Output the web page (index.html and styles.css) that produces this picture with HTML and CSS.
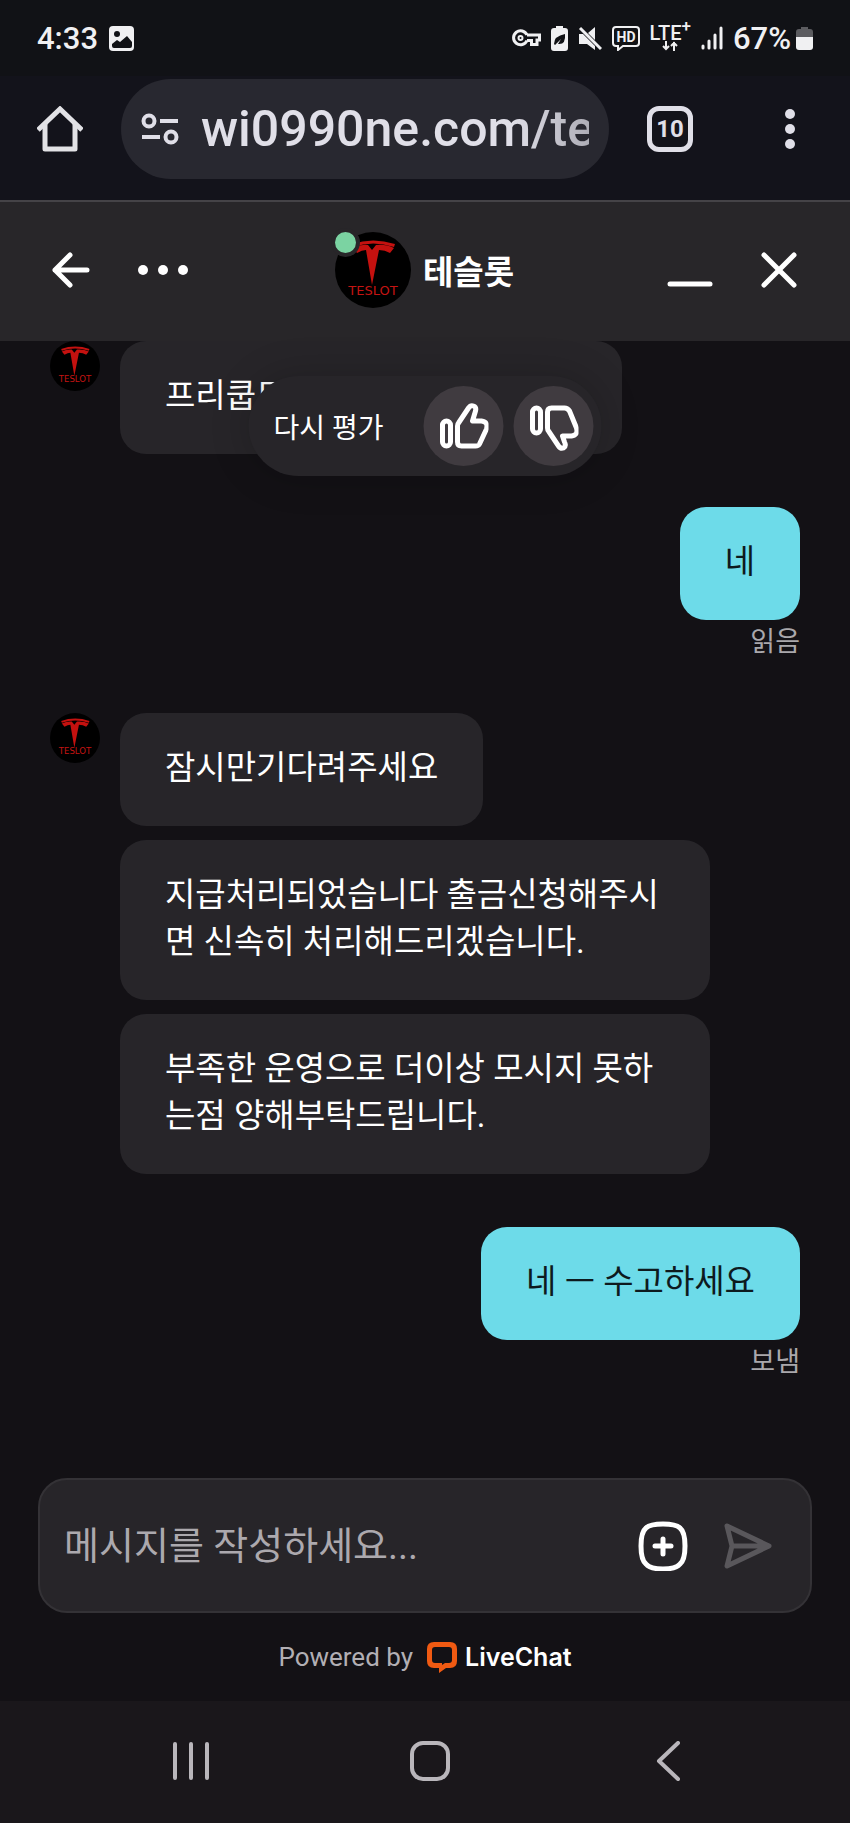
FILE: index.html
```
<!DOCTYPE html>
<html lang="ko">

<head>
    <meta charset="UTF-8">
    <meta name="viewport" content="width=device-width, initial-scale=1.0">
    <title>테슬롯</title>
    <link rel="stylesheet" href="styles.css">
</head>

<body>
    <!-- shared logo -->
    <svg class="defs" aria-hidden="true">
        <symbol id="logo" viewBox="0 0 76 76">
            <circle cx="38" cy="38" r="38" fill="#000" />
            <path d="M17 12Q38 5 60 12L59 15Q38 8 18 15Z" fill="#c4110f" />
            <path d="M18 16Q26 12 33 13L37 18L41 13Q51 12 59 16L55 21Q50 18 44 18L37 53L31 18Q27 18 22 21Z" fill="#c4110f" />
            <text x="38" y="63" text-anchor="middle" class="logo-text">TESLOT</text>
        </symbol>
    </svg>

    <div class="status">
        <span class="time">4:33</span>
        <svg class="picture" width="25" height="25" viewBox="0 0 25 25">
            <rect width="25" height="25" rx="4" fill="#f0f0f2" />
            <circle cx="8" cy="8" r="3" fill="#111216" />
            <path d="M3 18L8 14L11 16L18 10L23 16V20Q23 22 21 22H5Q3 22 3 20Z" fill="#111216" />
        </svg>
        <div class="indicators">
            <svg width="29" height="18" viewBox="0 0 29 18" fill="none" stroke="#f0f0f2" stroke-width="3">
                <path d="M15 6H27.5V11H25V15.5H19.5V11.5H15" />
                <path d="M15 6A7 7 0 1 0 15 11.5" />
                <circle cx="8.500" cy="9" r="2" stroke-width="2" />
            </svg>
            <svg width="17" height="25" viewBox="0 0 17 25">
                <path d="M5 0H12V2H14Q17 2 17 5V22Q17 25 14 25H3Q0 25 0 22V5Q0 2 3 2H5Z" fill="#f0f0f2" />
                <path d="M3 18Q3 10 14 8Q15 19 7 18L10 13L4 19Z" fill="#111216" />
            </svg>
            <svg width="24" height="25" viewBox="0 0 24 25">
                <path d="M1 8H5L17 20V24L9 18H1Z M10 7L17 1V14Z" fill="#f0f0f2" />
                <path d="M2 2L23 23" stroke="#f0f0f2" stroke-width="3" />
            </svg>
            <svg width="28" height="25" viewBox="0 0 28 25">
                <path d="M4 1H24Q27 1 27 4V17Q27 20 24 20H11L6 24V20H4Q1 20 1 17V4Q1 1 4 1Z" fill="none" stroke="#f0f0f2" stroke-width="2" />
                <text x="14" y="16" text-anchor="middle" class="hd">HD</text>
            </svg>
            <div class="lte">
                <span>LTE<sup>+</sup></span>
                <svg width="16" height="10" viewBox="0 0 16 10" fill="none" stroke="#f0f0f2" stroke-width="2">
                    <path d="M4 0V9M1 5L4 8L7 5M12 10V1M9 5L12 2L15 5" />
                </svg>
            </div>
            <svg width="22" height="24" viewBox="0 0 22 24" stroke="#f0f0f2" stroke-width="3" stroke-linecap="round">
                <path d="M2 20V22M8 15V22M14 9V22M20 2V22" />
            </svg>
            <div class="level">
                <span class="time">67%</span>
                <svg width="17" height="23" viewBox="0 0 17 23">
                    <path d="M5 0H12V2H14Q17 2 17 5V10H0V5Q0 2 3 2H5Z" fill="#5c5c60" />
                    <path d="M0 10H17V20Q17 23 14 23H3Q0 23 0 20Z" fill="#f0f0f2" />
                </svg>
            </div>
        </div>
    </div>

    <div class="toolbar">
        <button aria-label="Home">
            <svg width="46" height="46" viewBox="0 0 46 46" fill="none" stroke="#e2e2e6" stroke-width="5" stroke-linejoin="round">
                <path d="M1 24L23 3L45 24" stroke-linejoin="miter" />
                <path d="M8 18V43H38V18" />
            </svg>
        </button>
        <div class="address">
            <svg width="38" height="32" viewBox="0 0 38 32" fill="none" stroke="#e0dfe8" stroke-width="4">
                <circle cx="8" cy="8" r="5.500" />
                <circle cx="30" cy="24" r="5.500" />
                <path d="M19 8H37M1 24H19" />
            </svg>
            <input type="text" value="wi0990ne.com/te" aria-label="Address">
        </div>
        <button class="tabs" aria-label="Tabs">10</button>
        <button class="more" aria-label="Menu">
            <svg width="40" height="46" viewBox="0 0 40 46" fill="#e0dfe8">
                <circle cx="20" cy="8" r="5" />
                <circle cx="20" cy="23" r="5" />
                <circle cx="20" cy="38" r="5" />
            </svg>
        </button>
    </div>

    <header class="chat-header">
        <div class="actions">
            <button aria-label="뒤로">
                <svg width="38" height="38" viewBox="0 0 38 38" fill="none" stroke="#fff" stroke-width="5" stroke-linecap="round" stroke-linejoin="round">
                    <path d="M35 19H3M18 4L3 19L18 34" />
                </svg>
            </button>
            <button aria-label="옵션">
                <svg width="50" height="38" viewBox="0 0 50 38" fill="#fff">
                    <circle cx="5" cy="19" r="5" />
                    <circle cx="25" cy="19" r="5" />
                    <circle cx="45" cy="19" r="5" />
                </svg>
            </button>
        </div>
        <div class="agent">
            <div class="agent-photo">
                <svg width="76" height="76"><use href="#logo" /></svg>
                <span class="online"></span>
            </div>
            <h1>테슬롯</h1>
        </div>
        <div class="actions right">
            <button aria-label="최소화">
                <svg width="46" height="38" viewBox="0 0 46 38" stroke="#fff" stroke-width="5" stroke-linecap="round">
                    <path d="M3 33H43" />
                </svg>
            </button>
            <button aria-label="닫기">
                <svg width="36" height="38" viewBox="0 0 36 38" stroke="#fff" stroke-width="5" stroke-linecap="round">
                    <path d="M3 4L33 34M33 4L3 34" />
                </svg>
            </button>
        </div>
    </header>

    <main class="feed">
        <div class="rating">
            <span>다시 평가</span>
            <button aria-label="좋아요">
                <svg width="50" height="50" viewBox="0 0 50 50" fill="none" stroke="#fff" stroke-width="5" stroke-linejoin="round">
                    <rect x="4" y="20" width="8" height="25" rx="4" />
                    <path d="M20 22L30 7Q32 4 35 5Q38 6 37 10L34 20H43Q50 21 48 28L41 43Q40 45 37 45H23Q19 45 19 41V25Q19 23 20 22Z" />
                </svg>
            </button>
            <button aria-label="싫어요">
                <svg width="50" height="50" viewBox="0 0 50 50" fill="none" stroke="#fff" stroke-width="5" stroke-linejoin="round">
                    <rect x="4" y="7" width="8" height="25" rx="4" />
                    <path d="M20 30L30 45Q32 48 35 47Q38 45 36 41L34 35H43Q50 34 48 27L41 10Q39 7 36 7H23Q19 7 19 11V27Q19 29 20 30Z" />
                </svg>
            </button>
        </div>

        <div class="group">
            <svg class="photo" width="50" height="50"><use href="#logo" /></svg>
            <div class="messages">
                <p class="bubble">프리쿱드리면 사용가능하세요.</p>
            </div>
        </div>

        <div class="group own">
            <p class="bubble">네</p>
            <span class="receipt">읽음</span>
        </div>

        <div class="group">
            <svg class="photo" width="50" height="50"><use href="#logo" /></svg>
            <div class="messages">
                <p class="bubble">잠시만기다려주세요</p>
                <p class="bubble">지급처리되었습니다 출금신청해주시면 신속히 처리해드리겠습니다.</p>
                <p class="bubble">부족한 운영으로 더이상 모시지 못하는점 양해부탁드립니다.</p>
            </div>
        </div>

        <div class="group own">
            <p class="bubble">네 ㅡ 수고하세요</p>
            <span class="receipt">보냄</span>
        </div>
    </main>

    <form class="composer">
        <input type="text" placeholder="메시지를 작성하세요..." aria-label="메시지">
        <button type="button" aria-label="첨부">
            <svg width="50" height="50" viewBox="0 0 50 50" fill="none" stroke="#fff" stroke-width="5" stroke-linecap="round">
                <path d="M25 3Q38 3 42 7Q47 11 47 25Q47 39 42 43Q38 48 25 48Q12 48 8 43Q3 39 3 25Q3 11 8 7Q12 3 25 3Z" />
                <path d="M25 18V33M17 25H33" />
            </svg>
        </button>
        <button type="submit" aria-label="보내기">
            <svg width="48" height="46" viewBox="0 0 48 46" fill="none" stroke="#59575b" stroke-width="5" stroke-linecap="round" stroke-linejoin="round">
                <path d="M3 3L45 23L3 43L8 23ZM8 23H42" />
            </svg>
        </button>
    </form>

    <footer class="powered">
        <span>Powered by</span>
        <a href="#">
            <svg width="30" height="31" viewBox="0 0 30 31">
                <path fill="#f05a12" fill-rule="evenodd" d="M7 0H23Q30 0 30 7V19Q30 26 23 26H19L12 31V26H7Q0 26 0 19V7Q0 0 7 0ZM8 5Q5 5 5 8V18Q5 21 8 21H15V23L18 21H22Q25 21 25 18V8Q25 5 22 5Z" />
            </svg>
            LiveChat
        </a>
    </footer>

    <nav class="system">
        <button aria-label="Recents">
            <svg width="40" height="40" viewBox="0 0 40 40" stroke="#b9b6bb" stroke-width="4" stroke-linecap="round">
                <path d="M4 3V37M20 3V37M36 3V37" />
            </svg>
        </button>
        <button aria-label="Home">
            <svg width="40" height="40" viewBox="0 0 40 40" fill="none" stroke="#b9b6bb" stroke-width="4">
                <rect x="2" y="2" width="36" height="36" rx="11" />
            </svg>
        </button>
        <button aria-label="Back">
            <svg width="40" height="40" viewBox="0 0 40 40" fill="none" stroke="#b9b6bb" stroke-width="4" stroke-linecap="round" stroke-linejoin="round">
                <path d="M29 2L10 20L29 38" />
            </svg>
        </button>
    </nav>
</body>

</html>
```
FILE: styles.css
```
* {
    box-sizing: border-box;
}

body {
    margin: 0;
    min-height: 100vh;
    display: flex;
    flex-direction: column;
    background: #131115;
    color: #fff;
    font-family: Roboto, "Noto Sans CJK KR", sans-serif;
}

button {
    display: flex;
    padding: 0;
    border: 0;
    background: none;
    color: inherit;
    font: inherit;
}

input {
    min-width: 0;
    padding: 0;
    border: 0;
    outline: 0;
    background: none;
    font: inherit;
}

svg {
    display: block;
    flex-shrink: 0;
}

.defs {
    display: none;
}

.logo-text {
    font: 13px "DejaVu Sans", sans-serif;
    fill: #c41412;
}

/* phone status bar */
.status {
    display: flex;
    align-items: center;
    height: 76px;
    padding: 0 37px;
    background: #111216;
    color: #f0f0f2;
}

.time {
    font-size: 31px;
    font-weight: 500;
}

.picture {
    margin-left: 11px;
}

.indicators {
    display: flex;
    align-items: center;
    gap: 10px;
    margin-left: auto;
}

.hd {
    font: bold 14px Roboto, sans-serif;
    fill: #f0f0f2;
}

.lte {
    display: flex;
    flex-direction: column;
    align-items: center;
    font: 500 20px/16px Roboto, sans-serif;
}

.lte sup {
    font-size: 17px;
    line-height: 0;
}

.level {
    display: flex;
    align-items: center;
    gap: 5px;
}

/* browser bar */
.toolbar {
    display: flex;
    align-items: center;
    padding: 3px 40px 21px 37px;
    background: #13131b;
}

.address {
    flex: 1;
    display: flex;
    align-items: center;
    gap: 22px;
    min-width: 0;
    height: 100px;
    margin: 0 38px;
    padding: 0 20px;
    border-radius: 50px;
    background: #282830;
}

.address input {
    flex: 1;
    color: #e0dfe8;
    font-size: 50px;
    font-weight: 500;
    -webkit-mask-image: linear-gradient(to right, #000 80%, #000b);
    mask-image: linear-gradient(to right, #000 80%, #000b);
}

.tabs {
    align-items: center;
    justify-content: center;
    width: 46px;
    height: 46px;
    border: 5px solid #e0dfe8;
    border-radius: 12px;
    color: #e0dfe8;
    font-size: 24px;
    font-weight: 700;
}

.more {
    margin-left: 77px;
}

/* chat */
.chat-header {
    display: grid;
    grid-template-columns: 1fr auto 1fr;
    align-items: center;
    height: 141px;
    padding: 0 53px 4px 52px;
    border-top: 2px solid #454347;
    background: #282629;
}

.actions {
    display: flex;
    gap: 48px;
}

.right {
    justify-content: flex-end;
}

.agent {
    display: flex;
    align-items: center;
    gap: 12px;
}

.agent-photo {
    position: relative;
}

.online {
    position: absolute;
    top: -4px;
    left: -4px;
    width: 29px;
    height: 29px;
    border: 4px solid #282629;
    border-radius: 50%;
    background: #7bd3a2;
}

.agent h1 {
    margin: 0;
    font-size: 33px;
    font-weight: 700;
}

.feed {
    position: relative;
    flex: 1;
    display: flex;
    flex-direction: column;
    gap: 53px;
    padding: 0 50px 40px;
}

.group {
    display: flex;
    gap: 20px;
}

.messages {
    display: flex;
    flex-direction: column;
    align-items: flex-start;
    gap: 14px;
    max-width: 590px;
}

.bubble {
    margin: 0;
    padding: 31px 45px 35px;
    border-radius: 26px;
    background: #272529;
    font-size: 33px;
    line-height: 47px;
}

.own {
    flex-direction: column;
    align-items: flex-end;
    gap: 5px;
}

.own .bubble {
    background: #6ddbe9;
    color: #0d1a1e;
}

.receipt {
    color: #aaa8ac;
    font-size: 27px;
    line-height: 35px;
}

/* floats over the first messages */
.rating {
    position: absolute;
    top: 35px;
    left: 50%;
    transform: translateX(-50%);
    display: flex;
    align-items: center;
    gap: 10px;
    padding: 10px 8px 10px 25px;
    border-radius: 50px;
    background: #272529;
    box-shadow: 0 0 40px rgba(0, 0, 0, 0.2);
    font-size: 28px;
    white-space: nowrap;
}

.rating span {
    margin-right: 30px;
}

.rating button {
    align-items: center;
    justify-content: center;
    width: 80px;
    height: 80px;
    border-radius: 50%;
    background: #403b40;
}

.composer {
    display: flex;
    align-items: center;
    gap: 36px;
    height: 135px;
    margin: 0 38px;
    padding: 0 38px 0 24px;
    border: 2px solid #343236;
    border-radius: 29px;
    background: #272529;
}

.composer input {
    flex: 1;
    color: #fff;
    font-size: 38px;
}

.composer input::placeholder {
    color: #aca9ae;
}

.powered {
    display: flex;
    align-items: center;
    justify-content: center;
    gap: 14px;
    height: 88px;
    color: #b2afb4;
    font-size: 26px;
}

.powered a {
    display: flex;
    align-items: center;
    gap: 8px;
    color: #fff;
    font-family: Inter, sans-serif;
    font-size: 25px;
    font-weight: 600;
    text-decoration: none;
}

.system {
    display: flex;
    align-items: center;
    justify-content: space-between;
    height: 122px;
    padding: 0 161px 2px 171px;
    background: #1a171b;
}
```
